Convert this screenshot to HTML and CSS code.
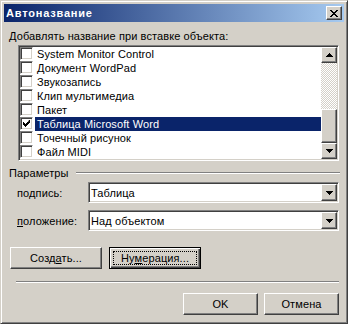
FILE: index.html
```html
<!DOCTYPE html>
<html lang="ru">
<head>
  <meta charset="UTF-8" />
  <title>Автоназвание</title>
  <link rel="stylesheet" href="styles.css">
</head>
<body>
  <div class="window">
    <div class="titlebar">
      <span class="title">Автоназвание</span>
      <button class="close-btn">
        <svg width="8" height="7" viewBox="0 0 8 7"><path d="M0 0h2v1h1v1h2v-1h1v-1h2v1h-1v1h-1v1h-1v1h1v1h1v1h1v1h-2v-1h-1v-1h-2v1h-1v1h-2v-1h1v-1h1v-1h1v-1h-1v-1h-1v-1h-1z" fill="#000"/></svg>
      </button>
    </div>

    <div class="content">
      <div class="list-label"><u>Д</u>обавлять название при вставке объекта:</div>

      <div class="listbox">
        <div class="items">
          <div class="item"><span class="check"></span><span class="name">System Monitor Control</span></div>
          <div class="item"><span class="check"></span><span class="name">Документ WordPad</span></div>
          <div class="item"><span class="check"></span><span class="name">Звукозапись</span></div>
          <div class="item"><span class="check"></span><span class="name">Клип мультимедиа</span></div>
          <div class="item"><span class="check"></span><span class="name">Пакет</span></div>
          <div class="item selected">
            <span class="check">
              <svg width="7" height="7" viewBox="0 0 7 7"><path d="M6 0h1v3h-1v1h-1v1h-1v1h-1v1h-1v-1h-1v-1h-1v-3h1v1h1v1h1v-1h1v-1h1z" fill="#000"/></svg>
            </span>
            <span class="name">Таблица Microsoft Word</span>
          </div>
          <div class="item"><span class="check"></span><span class="name">Точечный рисунок</span></div>
          <div class="item"><span class="check"></span><span class="name">Файл MIDI</span></div>
        </div>
        <div class="scrollbar">
          <div class="raised scroll-btn">
            <svg width="7" height="4" viewBox="0 0 7 4"><path d="M3 0h1v1h1v1h1v1h1v1h-7v-1h1v-1h1v-1h1z" fill="#000"/></svg>
          </div>
          <div class="track"></div>
          <div class="raised thumb"></div>
          <div class="raised scroll-btn">
            <svg width="7" height="4" viewBox="0 0 7 4"><path d="M0 0h7v1h-1v1h-1v1h-1v1h-1v-1h-1v-1h-1v-1h-1z" fill="#000"/></svg>
          </div>
        </div>
      </div>

      <div class="group-head">
        <span>Параметры</span>
        <span class="etched"></span>
      </div>

      <div class="field-row">
        <span class="field-label">по<u>д</u>пись:</span>
        <div class="combo">
          <span class="combo-text">Таблица</span>
          <div class="raised combo-btn">
            <svg width="7" height="4" viewBox="0 0 7 4"><path d="M0 0h7v1h-1v1h-1v1h-1v1h-1v-1h-1v-1h-1v-1h-1z" fill="#000"/></svg>
          </div>
        </div>
      </div>

      <div class="field-row second">
        <span class="field-label"><u>п</u>оложение:</span>
        <div class="combo">
          <span class="combo-text">Над объектом</span>
          <div class="raised combo-btn">
            <svg width="7" height="4" viewBox="0 0 7 4"><path d="M0 0h7v1h-1v1h-1v1h-1v1h-1v-1h-1v-1h-1v-1h-1z" fill="#000"/></svg>
          </div>
        </div>
      </div>

      <div class="action-row">
        <button class="btn wide">Созд<u>а</u>ть...</button>
        <button class="btn wide default"><span class="focus">Ну<u>м</u>ерация...</span></button>
      </div>

      <div class="separator"></div>

      <div class="footer">
        <button class="btn">OK</button>
        <button class="btn">Отмена</button>
      </div>
    </div>
  </div>
</body>
</html>
```

FILE: styles.css
```css
* {
  margin: 0;
  padding: 0;
  box-sizing: border-box;
}

body {
  background: #d4d0c8;
  font-family: 'Liberation Sans', Arial, sans-serif;
  font-size: 11px;
  letter-spacing: 0.1px;
  color: #000;
}

u {
  text-decoration: underline;
  text-underline-offset: 1px;
}

.window {
  width: 348px;
  height: 324px;
  background: #d4d0c8;
  border: 1px solid;
  border-color: #d4d0c8 #404040 #404040 #d4d0c8;
  box-shadow: inset 1px 1px #fff, inset -1px -1px #808080;
  padding: 3px;
  display: flex;
  flex-direction: column;
}

.titlebar {
  height: 18px;
  display: flex;
  align-items: center;
  padding: 0 2px;
  background: linear-gradient(to right, #0a246a, #a6caf0);
}

.title {
  color: #fff;
  font-weight: bold;
  font-size: 11px;
  letter-spacing: 0.8px;
}

.raised,
.close-btn,
.btn {
  background: #d4d0c8;
  border: 1px solid;
  border-color: #fff #404040 #404040 #fff;
  box-shadow: inset -1px -1px #808080, inset 1px 1px #d4d0c8;
}

.close-btn {
  margin-left: auto;
  width: 16px;
  height: 14px;
  display: flex;
  align-items: center;
  justify-content: center;
}

.content {
  flex: 1;
  display: flex;
  flex-direction: column;
  padding: 8px 5px 0 5px;
}

.list-label {
  height: 13px;
  line-height: 13px;
}

.listbox,
.combo {
  background: #fff;
  border: 1px solid;
  border-color: #808080 #fff #fff #808080;
  box-shadow: inset 1px 1px #404040, inset -1px -1px #d4d0c8;
  padding: 1px;
}

.listbox {
  margin: 2px 0 0 9px;
  width: 321px;
  height: 116px;
  display: flex;
}

.items {
  flex: 1;
  display: flex;
  flex-direction: column;
}

.item {
  height: 14px;
  display: flex;
}

.check {
  width: 13px;
  height: 13px;
  background: #fff;
  border: 1px solid;
  border-color: #808080 #fff #fff #808080;
  box-shadow: inset 1px 1px #404040, inset -1px -1px #d4d0c8;
  margin-right: 2px;
  display: flex;
  align-items: center;
  justify-content: center;
}

.name {
  flex: 1;
  line-height: 14px;
  padding-left: 2px;
  white-space: nowrap;
}

.item.selected .name {
  background: #0a246a;
  color: #fff;
}

.scrollbar {
  width: 16px;
  display: flex;
  flex-direction: column;
}

.scroll-btn {
  height: 16px;
  display: flex;
  align-items: center;
  justify-content: center;
}

.track {
  flex: 1;
  background: repeating-conic-gradient(#d4d0c8 0 25%, #fff 0 50%) 0 0 / 2px 2px;
}

.thumb {
  height: 34px;
}

.group-head {
  margin-top: 5px;
  height: 14px;
  display: flex;
  align-items: center;
}

.etched {
  flex: 1;
  height: 2px;
  margin-left: 7px;
  margin-right: -1px;
  border-top: 1px solid #808080;
  border-bottom: 1px solid #fff;
}

.field-row {
  margin-top: 2px;
  height: 21px;
  display: flex;
  align-items: center;
}

.field-row.second {
  margin-top: 7px;
}

.field-label {
  width: 79px;
  padding-left: 8px;
}

.combo {
  width: 251px;
  height: 21px;
  display: flex;
  align-items: center;
}

.combo-text {
  flex: 1;
  padding-left: 1px;
}

.combo-btn {
  width: 16px;
  height: 17px;
  display: flex;
  align-items: center;
  justify-content: center;
}

.btn {
  height: 22px;
  width: 75px;
  font-family: inherit;
  font-size: 11px;
  letter-spacing: 0.1px;
  color: #000;
}

.action-row {
  margin-top: 16px;
  display: flex;
  gap: 7px;
  padding-left: 1px;
}

.btn.wide {
  width: 92px;
}

.btn.default {
  border: 1px solid #000;
  box-shadow: inset 1px 1px #fff, inset -1px -1px #404040, inset -2px -2px #808080;
  display: flex;
  align-items: center;
  justify-content: center;
  padding: 3px;
}

.focus {
  flex: 1;
  height: 100%;
  border: 1px dotted #000;
  display: flex;
  align-items: center;
  justify-content: center;
}

.separator {
  margin: 12px 0 0 7px;
  height: 2px;
  border-top: 1px solid #808080;
  border-bottom: 1px solid #fff;
}

.footer {
  margin-top: 10px;
  display: flex;
  justify-content: flex-end;
  gap: 6px;
}
```
